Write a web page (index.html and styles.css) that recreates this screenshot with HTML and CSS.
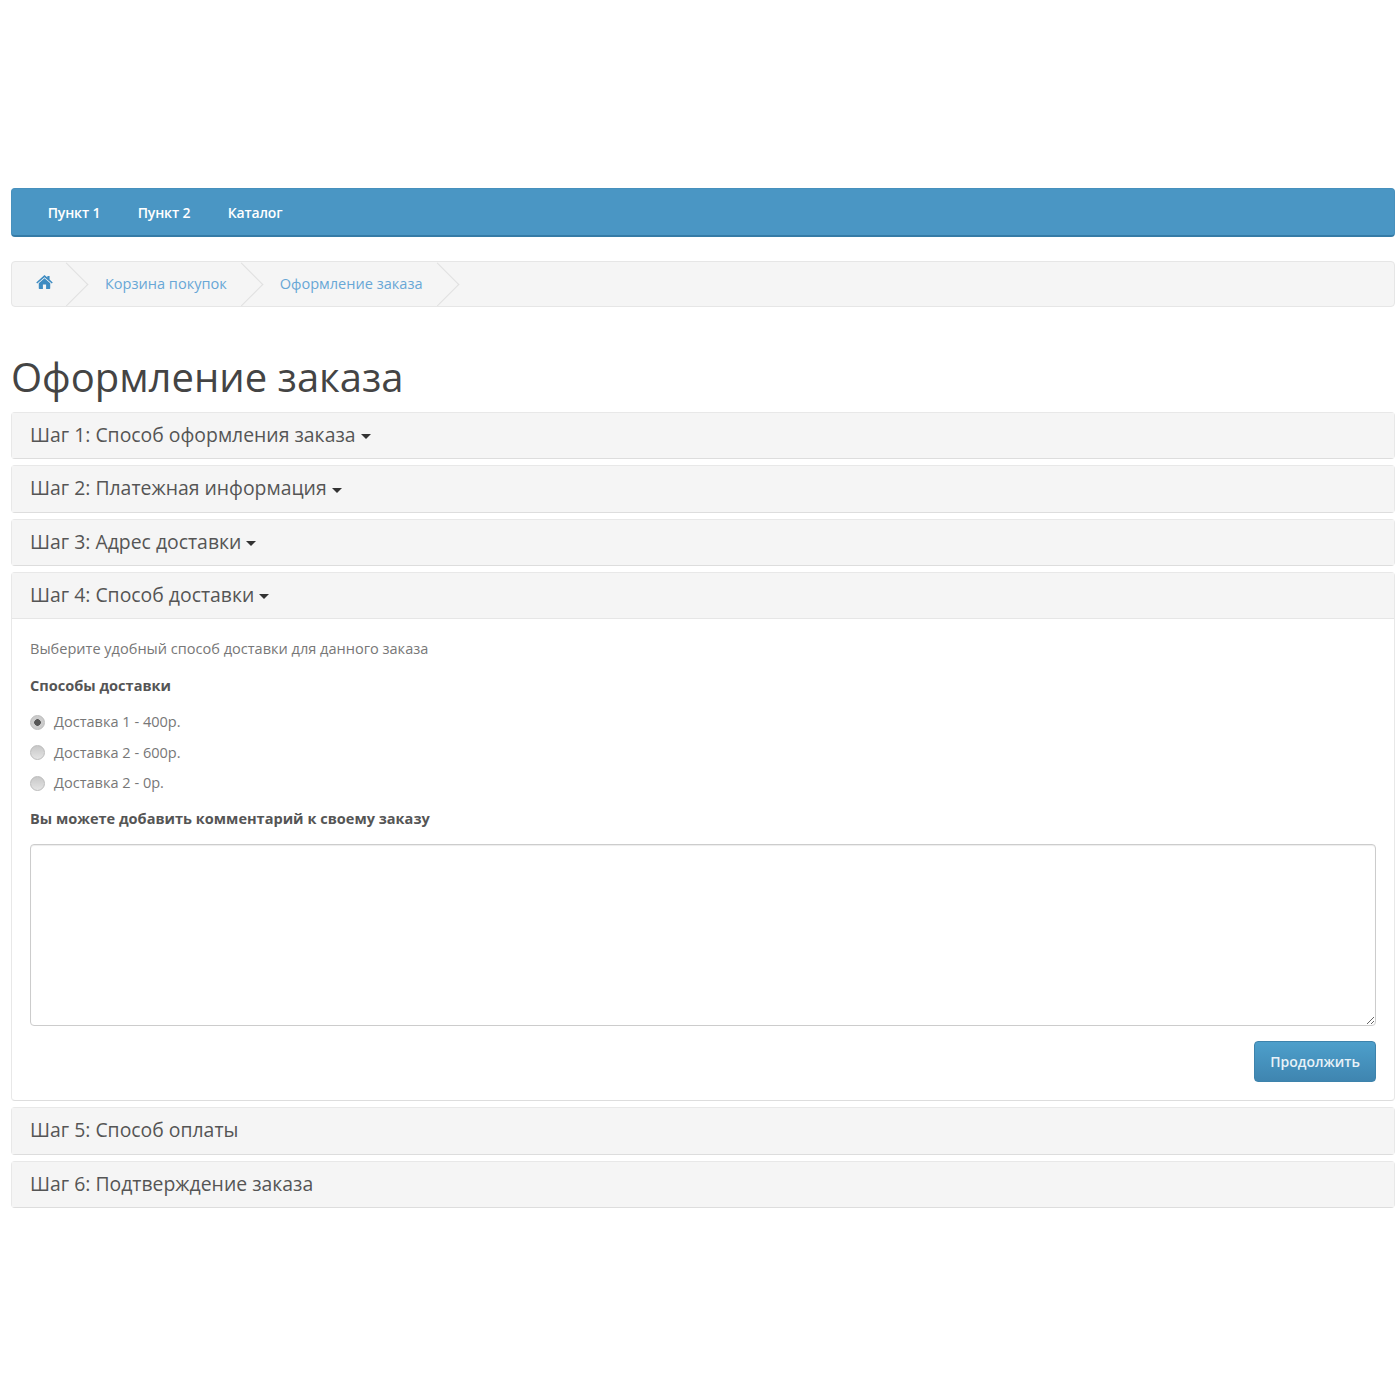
FILE: index.html
```html
<!DOCTYPE html>
<html lang="en">
<head>
  <meta charset="UTF-8">
  <meta name="viewport" content="width=device-width, initial-scale=1.0">
  <title>Оформление заказа</title>
  <link rel="stylesheet" href="styles.css">
</head>
<body>
  <ul class="menu">
    <li><a href="#">Пункт 1</a></li>
    <li><a href="#">Пункт 2</a></li>
    <li><a href="#">Каталог</a></li>
  </ul>

  <ul class="breadcrumb">
    <li><a href="#" aria-label="Главная">
      <svg class="home-icon" viewBox="0 0 26 22" width="17" height="14"><path d="M13 0 L17.5 4 V1.5 H21 V7.2 L26 11.6 L24.4 13.4 L13 3.4 L1.6 13.4 L0 11.6 Z M13 5.2 L22 13 V21 Q22 22 21 22 H15.5 V15 H10.5 V22 H5 Q4 22 4 21 V13 Z"/></svg>
    </a></li>
    <li><a href="#">Корзина покупок</a></li>
    <li><a href="#">Оформление заказа</a></li>
  </ul>

  <h1>Оформление заказа</h1>

  <div class="panel">
    <div class="panel-heading">Шаг 1: Способ оформления заказа <span class="caret"></span></div>
  </div>
  <div class="panel">
    <div class="panel-heading">Шаг 2: Платежная информация <span class="caret"></span></div>
  </div>
  <div class="panel">
    <div class="panel-heading">Шаг 3: Адрес доставки <span class="caret"></span></div>
  </div>
  <div class="panel">
    <div class="panel-heading open">Шаг 4: Способ доставки <span class="caret"></span></div>
    <div class="panel-body">
      <p>Выберите удобный способ доставки для данного заказа</p>
      <p class="label">Способы доставки</p>
      <label class="radio"><input type="radio" name="shipping" checked> Доставка 1 - 400р.</label>
      <label class="radio"><input type="radio" name="shipping"> Доставка 2 - 600р.</label>
      <label class="radio"><input type="radio" name="shipping"> Доставка 2 - 0р.</label>
      <p class="label comment-label">Вы можете добавить комментарий к своему заказу</p>
      <textarea rows="8"></textarea>
      <div class="buttons">
        <button type="button">Продолжить</button>
      </div>
    </div>
  </div>
  <div class="panel">
    <div class="panel-heading">Шаг 5: Способ оплаты</div>
  </div>
  <div class="panel">
    <div class="panel-heading">Шаг 6: Подтверждение заказа</div>
  </div>
</body>
</html>
```

FILE: styles.css
```css
body {
  margin: 0;
  padding: 188px 5px 0 11px;
  background-color: #fff;
  color: #777;
  font-family: "Open Sans", sans-serif;
  font-size: 14.55px;
  line-height: 20px;
}

a {
  text-decoration: none;
}

.menu {
  display: flex;
  height: 49px;
  box-sizing: border-box;
  margin: 0 0 24px;
  padding: 0 0 0 17px;
  list-style-type: none;
  background-color: #4a96c4;
  border: 1px solid #4790bd;
  border-bottom: 2px solid #357ba6;
  border-radius: 4px;
}

.menu a {
  display: block;
  padding: 14px 18.7px;
  color: #fff;
  font-size: 14px;
  font-weight: 600;
  letter-spacing: -0.15px;
}

.breadcrumb {
  display: flex;
  height: 46px;
  box-sizing: border-box;
  margin: 0 0 42px;
  padding: 0;
  list-style-type: none;
  overflow: hidden;
  background-color: #f5f5f5;
  border: 1px solid #e6e6e6;
  border-radius: 4px;
}

.breadcrumb li {
  position: relative;
  padding: 0 30px 0 23px;
}

.breadcrumb li:first-child {
  padding: 0 29px 0 24px;
}

.breadcrumb li::after {
  content: "";
  position: absolute;
  top: 6.5px;
  right: 0;
  width: 31px;
  height: 31px;
  box-sizing: border-box;
  border-top: 1px solid #e0e0e0;
  border-right: 1px solid #e0e0e0;
  transform: rotate(45deg);
}

.breadcrumb a {
  display: block;
  color: #68a7d6;
  line-height: 43px;
}

.home-icon {
  display: block;
  margin-top: 13px;
  fill: #3f8cc2;
}

h1 {
  margin: 0 0 8px;
  color: #444;
  font-size: 40px;
  font-weight: 400;
  line-height: 55px;
}

.panel {
  margin-bottom: 6px;
  background-color: #fff;
  border: 1px solid #e8e8e8;
  border-bottom: 1px solid #ddd;
  border-radius: 4px;
}

.panel-heading {
  height: 45.3px;
  box-sizing: border-box;
  padding: 11px 18px 0;
  background-color: #f5f5f5;
  color: #555;
  font-size: 19.4px;
  line-height: 22px;
}

.panel-heading.open {
  height: 46.3px;
  border-bottom: 1px solid #e6e6e6;
}

.caret {
  display: inline-block;
  vertical-align: middle;
  border-top: 5px solid #333;
  border-left: 5px solid transparent;
  border-right: 5px solid transparent;
}

.panel-body {
  padding: 19px 18px 18.2px;
}

.panel-body p {
  margin: 0 0 16.5px;
}

.panel-body .label {
  color: #555;
  font-weight: 700;
}

.radio {
  display: flex;
  align-items: center;
  height: 20px;
  margin-bottom: 10.5px;
}

.radio input {
  appearance: none;
  width: 15px;
  height: 15px;
  margin: 2px 9px 0 0;
  background-image: linear-gradient(to bottom, #c8c8c8, #e4e4e4);
  border: 1px solid #bbb;
  border-radius: 50%;
}

.radio input:checked {
  background-image: radial-gradient(circle, #555 0, #555 3px, #ccc 3.6px);
}

.panel-body .comment-label {
  margin: 16px 0 16px;
}

textarea {
  display: block;
  width: 100%;
  height: 182px;
  box-sizing: border-box;
  padding: 8px 12px;
  background-color: #fff;
  border: 1px solid #ccc;
  border-radius: 4px;
  box-shadow: inset 0 1px 1px rgba(0, 0, 0, 0.075);
}

.buttons {
  display: flex;
  justify-content: flex-end;
  margin-top: 15px;
}

button {
  width: 122px;
  height: 41px;
  padding: 0;
  background-image: linear-gradient(to bottom, #4d9fcb, #3f85b0);
  color: #e8f2f8;
  font-family: "Open Sans", sans-serif;
  font-size: 14px;
  font-weight: 600;
  border: 1px solid #3d83ac;
  border-radius: 4px;
}
```
